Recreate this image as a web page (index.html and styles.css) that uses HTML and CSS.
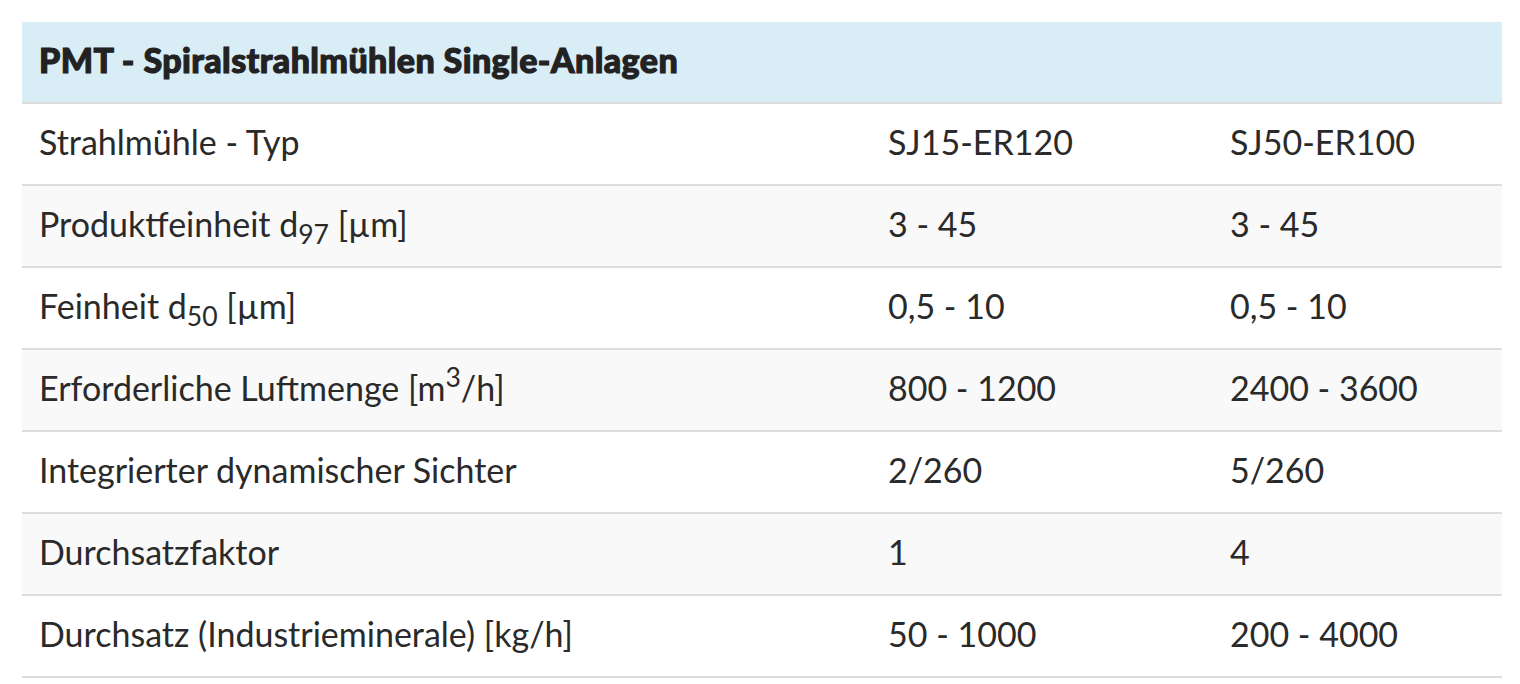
FILE: index.html
```html
<!DOCTYPE html>
<html lang="de">
<head>
<meta charset="utf-8">
<link rel="stylesheet" href="styles.css">
</head>
<body>
<table class="spec">
  <colgroup>
    <col class="c1"><col class="c2"><col class="c3">
  </colgroup>
  <thead>
    <tr><th colspan="3">PMT - Spiralstrahlmühlen Single-Anlagen</th></tr>
  </thead>
  <tbody>
    <tr><td>Strahlmühle - Typ</td><td>SJ15-ER120</td><td>SJ50-ER100</td></tr>
    <tr><td>Produktfeinheit d<sub>97</sub> [µm]</td><td>3 - 45</td><td>3 - 45</td></tr>
    <tr><td>Feinheit d<sub>50</sub> [µm]</td><td>0,5 - 10</td><td>0,5 - 10</td></tr>
    <tr><td>Erforderliche Luftmenge [m<sup>3</sup>/h]</td><td>800 - 1200</td><td>2400 - 3600</td></tr>
    <tr><td>Integrierter dynamischer Sichter</td><td>2/260</td><td>5/260</td></tr>
    <tr><td>Durchsatzfaktor</td><td>1</td><td>4</td></tr>
    <tr><td>Durchsatz (Industrieminerale) [kg/h]</td><td>50 - 1000</td><td>200 - 4000</td></tr>
  </tbody>
</table>
</body>
</html>
```
FILE: styles.css
```css
html, body {
  margin: 0;
  padding: 0;
  background: #fff;
}
body {
  padding: 22px 18px 0 22px;
  font-family: Lato, "Liberation Sans", sans-serif;
  color: #2a2a2a;
}
.spec {
  width: 1480px;
  border-collapse: collapse;
  table-layout: fixed;
  font-size: 34px;
}
.spec .c1 { width: 849px; }
.spec .c2 { width: 342px; }
.spec .c3 { width: 289px; }
.spec th {
  background: #d9edf7;
  text-align: left;
  font-weight: 900;
  height: 81px;
  padding: 0 17px 5px;
  box-sizing: border-box;
  border-bottom: 2px solid #dedede;
  color: #222;
  letter-spacing: 0.4px;
  -webkit-text-stroke: 1.1px #222;
}
.spec td {
  height: 82px;
  padding: 0 17px 6px;
  box-sizing: border-box;
  border-bottom: 2px solid #dedede;
  vertical-align: middle;
  white-space: nowrap;
}
.spec tbody tr:nth-child(even) { background: #f9f9f9; }
.spec sub, .spec sup {
  font-size: 78%;
  line-height: 0;
  position: relative;
}
.spec sub { vertical-align: baseline; bottom: -0.28em; }
.spec sup { vertical-align: baseline; top: -0.5em; }
```
